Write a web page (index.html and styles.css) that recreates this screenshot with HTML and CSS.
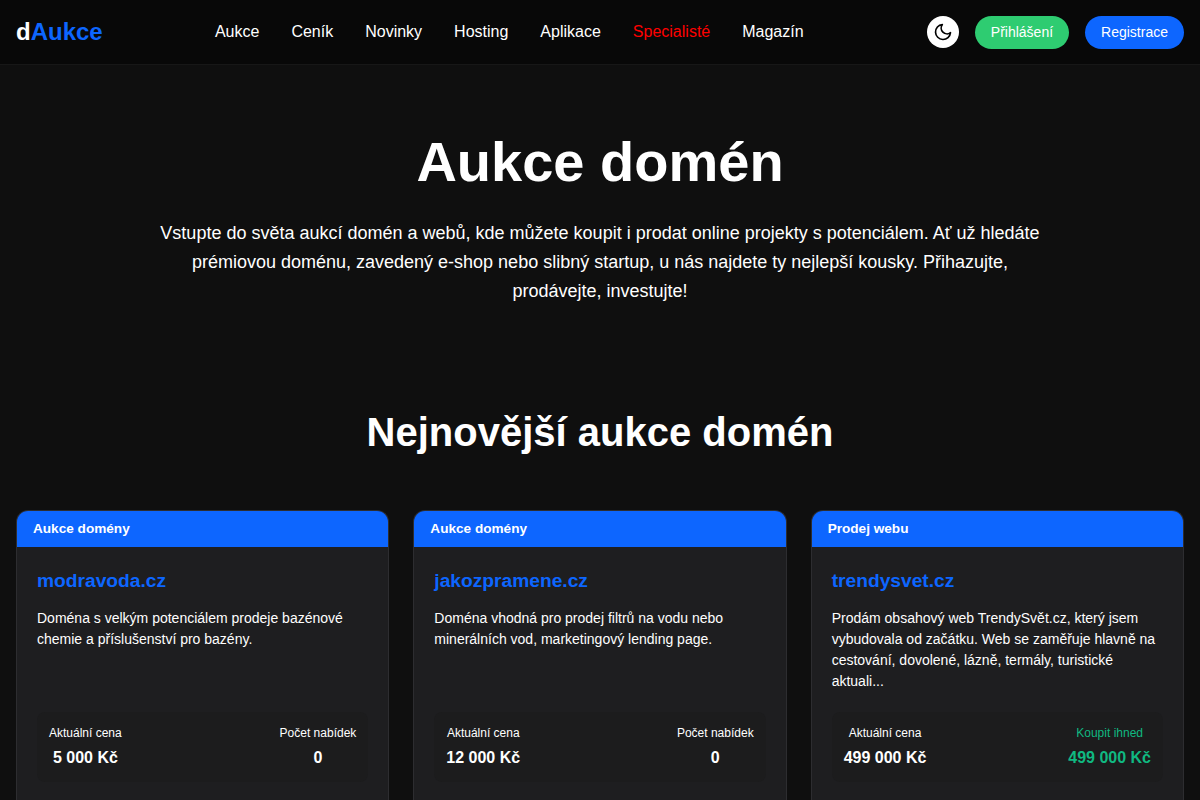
FILE: index.html
```html
<!DOCTYPE html>
<html lang="cs">
<head>
<meta charset="utf-8">
<title>dAukce</title>
<link rel="stylesheet" href="styles.css">
</head>
<body>
<header class="header">
  <a class="logo">d<span>Aukce</span></a>
  <nav class="nav">
    <a>Aukce</a><a>Ceník</a><a>Novinky</a><a>Hosting</a><a>Aplikace</a><a class="hot">Specialisté</a><a>Magazín</a>
  </nav>
  <div class="actions">
    <button class="theme" aria-label="Motiv"><svg width="20" height="20" viewBox="0 0 24 24" fill="none" stroke="#000" stroke-width="2" stroke-linecap="round" stroke-linejoin="round"><path d="M21 12.79A9 9 0 1 1 11.21 3 7 7 0 0 0 21 12.79z"/></svg></button>
    <a class="btn green">Přihlášení</a>
    <a class="btn blue">Registrace</a>
  </div>
</header>
<main>
  <section class="hero">
    <h1>Aukce domén</h1>
    <p>Vstupte do světa aukcí domén a webů, kde můžete koupit i prodat online projekty s potenciálem. Ať už hledáte prémiovou doménu, zavedený e-shop nebo slibný startup, u nás najdete ty nejlepší kousky. Přihazujte, prodávejte, investujte!</p>
  </section>
  <section class="latest">
    <h2>Nejnovější aukce domén</h2>
    <div class="grid">
      <article class="card">
        <div class="type">Aukce domény</div>
        <div class="body">
          <h3>modravoda.cz</h3>
          <p class="desc">Doména s velkým potenciálem prodeje bazénové chemie a příslušenství pro bazény.</p>
          <div class="stats">
            <div class="stat"><span>Aktuální cena</span><b>5 000 Kč</b></div>
            <div class="stat"><span>Počet nabídek</span><b>0</b></div>
          </div>
        </div>
      </article>
      <article class="card">
        <div class="type">Aukce domény</div>
        <div class="body">
          <h3>jakozpramene.cz</h3>
          <p class="desc">Doména vhodná pro prodej filtrů na vodu nebo minerálních vod, marketingový lending page.</p>
          <div class="stats">
            <div class="stat"><span>Aktuální cena</span><b>12 000 Kč</b></div>
            <div class="stat"><span>Počet nabídek</span><b>0</b></div>
          </div>
        </div>
      </article>
      <article class="card">
        <div class="type">Prodej webu</div>
        <div class="body">
          <h3>trendysvet.cz</h3>
          <p class="desc">Prodám obsahový web TrendySvět.cz, který jsem vybudovala od začátku. Web se zaměřuje hlavně na cestování, dovolené, lázně, termály, turistické aktuali...</p>
          <div class="stats">
            <div class="stat"><span>Aktuální cena</span><b>499 000 Kč</b></div>
            <div class="stat buy"><span>Koupit ihned</span><b>499 000 Kč</b></div>
          </div>
        </div>
      </article>
    </div>
  </section>
</main>
</body>
</html>
```
FILE: styles.css
```css
* { box-sizing: border-box; margin: 0; padding: 0; }
body { height: 800px; display: flex; flex-direction: column; overflow: hidden; background: #0f0f0f; color: #fff; font-family: "Liberation Sans", Arial, sans-serif; font-size: 16px; line-height: 1.6; }
main { flex: 1; min-height: 0; overflow: hidden; }
.header { height: 65px; flex: none; padding: 0 16px; display: flex; align-items: center; justify-content: space-between; background: #080808; border-bottom: 1px solid #171717; }
.logo { font-size: 24px; font-weight: 700; }
.logo span { color: #0d66ff; }
.nav { display: flex; gap: 32px; margin-right: 11px; }
.hot { color: #f00; }
.actions { display: flex; align-items: center; gap: 16px; }
.theme { width: 32px; height: 32px; border: 0; border-radius: 50%; background: #fff; display: flex; align-items: center; justify-content: center; }
.btn { height: 33px; padding: 0 16px; border-radius: 17px; font-size: 14px; line-height: 33px; }
.green { background: #2ecc71; }
.blue { background: #0d66ff; }
.hero { padding: 63px 16px 64px; text-align: center; }
.hero h1 { font-size: 56px; line-height: 67px; margin-bottom: 24px; }
.hero p { max-width: 900px; margin: 0 auto; font-size: 18px; line-height: 29px; }
.latest { padding: 30px 16px 0; }
.latest h2 { text-align: center; font-size: 40px; line-height: 64px; margin-bottom: 46px; }
.grid { display: grid; grid-template-columns: repeat(3, 1fr); gap: 24px; }
.card { height: 290px; border: 1px solid #2d2d30; border-bottom: 0; border-radius: 12px 12px 0 0; background: #1e1e20; overflow: hidden; }
.type { height: 36px; padding: 0 16px; background: #0d66ff; font-size: 13.6px; font-weight: 700; line-height: 35px; }
.body { padding: 19px 20px 0; }
.card h3 { color: #0d66ff; font-size: 19.2px; line-height: 29px; margin-bottom: 13px; }
.desc { height: 84px; font-size: 14px; line-height: 21px; margin-bottom: 20px; }
.stats { height: 70px; display: flex; justify-content: space-between; padding: 12px; border-radius: 8px; background: #1c1c1d; }
.stat { display: flex; flex-direction: column; align-items: center; }
.stat span { font-size: 12px; line-height: 19px; margin-bottom: 3px; }
.stat b { font-size: 16px; line-height: 24px; }
.buy { color: #10b981; }
```
